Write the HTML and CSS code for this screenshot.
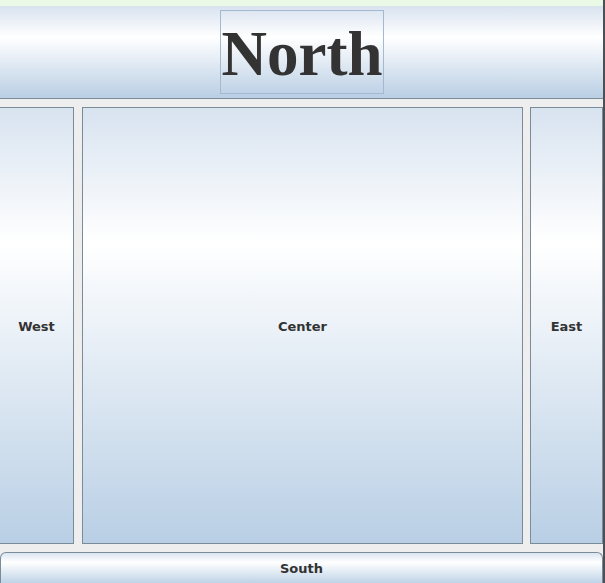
FILE: index.html
```html
<!DOCTYPE html>
<html>
<head>
<meta charset="utf-8">
<link rel="stylesheet" href="styles.css">
</head>
<body>
<div class="frame">
  <div class="strip"></div>
  <div class="north">
    <div class="focus">North</div>
  </div>
  <div class="middle">
    <div class="panel west">West</div>
    <div class="panel center">Center</div>
    <div class="panel east">East</div>
  </div>
  <div class="south">South</div>
</div>
</body>
</html>
```

FILE: styles.css
```css
html, body {
  margin: 0;
  padding: 0;
  background: #eeeeee;
}
.frame {
  width: 603px;
  height: 583px;
  border-right: 2px solid #4b5056;
  display: flex;
  flex-direction: column;
  background: #eeeeee;
  overflow: hidden;
  font-family: "DejaVu Sans", sans-serif;
  font-weight: bold;
  font-size: 13px;
  color: #333333;
}
.strip {
  height: 6px;
  background: #eaf8e6;
  flex: none;
}
.north {
  height: 92px;
  flex: none;
  border-bottom: 1px solid #7a8b9a;
  background: linear-gradient(to bottom, #d8e2ef 0%, #ffffff 34%, #b9cee4 100%);
  display: flex;
  justify-content: center;
  align-items: flex-start;
}
.focus {
  box-sizing: border-box;
  margin-top: 4px;
  margin-left: 1px;
  width: 164px;
  height: 84px;
  padding-top: 5px;
  border: 1px solid #a3b9d2;
  font-family: "Liberation Serif", serif;
  font-weight: bold;
  font-size: 63px;
  line-height: 76px;
  text-align: center;
  color: #333333;
}
.middle {
  margin-top: 8px;
  height: 437px;
  flex: none;
  display: flex;
  gap: 8px;
}
.panel {
  box-sizing: border-box;
  height: 437px;
  border: 1px solid #7a8b9a;
  background: linear-gradient(to bottom, #d8e3f0 0%, #ffffff 31%, #b9cfe5 100%);
  display: flex;
  align-items: center;
  justify-content: center;
  padding-top: 2px;
}
.west {
  width: 75px;
  margin-left: -1px;
}
.center {
  width: 441px;
}
.east {
  width: 73px;
  margin-left: -1px;
}
.south {
  margin-top: 8px;
  box-sizing: border-box;
  height: 32px;
  flex: none;
  border: 1px solid #7a8b9a;
  border-bottom: none;
  border-radius: 6px 6px 0 0;
  background: linear-gradient(to bottom, #dbe5f1 0%, #ffffff 30%, #bcd1e6 100%);
  display: flex;
  align-items: center;
  justify-content: center;
}
```
